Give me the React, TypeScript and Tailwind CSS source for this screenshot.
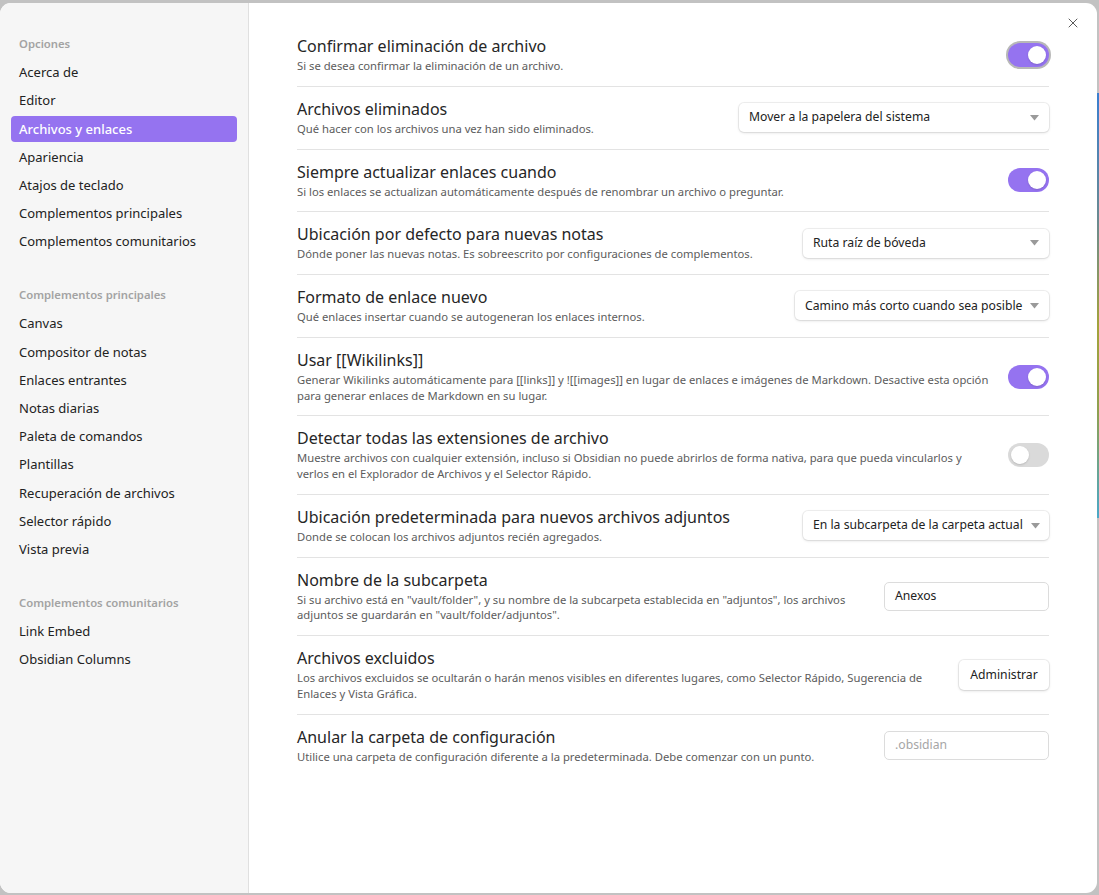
import { X } from "lucide-react";

type Control =
  | { kind: "toggle"; on: boolean; focused?: boolean }
  | { kind: "select"; value: string; width: string }
  | { kind: "input"; value: string; placeholder?: boolean }
  | { kind: "button"; label: string };

type Setting = {
  name: string;
  desc: string[];
  control: Control;
};

const settings: Setting[] = [
  {
    name: "Confirmar eliminación de archivo",
    desc: ["Si se desea confirmar la eliminación de un archivo."],
    control: { kind: "toggle", on: true, focused: true },
  },
  {
    name: "Archivos eliminados",
    desc: ["Qué hacer con los archivos una vez han sido eliminados."],
    control: { kind: "select", value: "Mover a la papelera del sistema", width: "w-[310px]" },
  },
  {
    name: "Siempre actualizar enlaces cuando",
    desc: ["Si los enlaces se actualizan automáticamente después de renombrar un archivo o preguntar."],
    control: { kind: "toggle", on: true },
  },
  {
    name: "Ubicación por defecto para nuevas notas",
    desc: ["Dónde poner las nuevas notas. Es sobreescrito por configuraciones de complementos."],
    control: { kind: "select", value: "Ruta raíz de bóveda", width: "w-[246px]" },
  },
  {
    name: "Formato de enlace nuevo",
    desc: ["Qué enlaces insertar cuando se autogeneran los enlaces internos."],
    control: { kind: "select", value: "Camino más corto cuando sea posible", width: "w-[254px]" },
  },
  {
    name: "Usar [[Wikilinks]]",
    desc: [
      "Generar Wikilinks automáticamente para [[links]] y ![[images]] en lugar de enlaces e imágenes de Markdown. Desactive esta opción",
      "para generar enlaces de Markdown en su lugar.",
    ],
    control: { kind: "toggle", on: true },
  },
  {
    name: "Detectar todas las extensiones de archivo",
    desc: [
      "Muestre archivos con cualquier extensión, incluso si Obsidian no puede abrirlos de forma nativa, para que pueda vincularlos y",
      "verlos en el Explorador de Archivos y el Selector Rápido.",
    ],
    control: { kind: "toggle", on: false },
  },
  {
    name: "Ubicación predeterminada para nuevos archivos adjuntos",
    desc: ["Donde se colocan los archivos adjuntos recién agregados."],
    control: { kind: "select", value: "En la subcarpeta de la carpeta actual", width: "w-[246px]" },
  },
  {
    name: "Nombre de la subcarpeta",
    desc: [
      "Si su archivo está en \"vault/folder\", y su nombre de la subcarpeta establecida en \"adjuntos\", los archivos",
      "adjuntos se guardarán en \"vault/folder/adjuntos\".",
    ],
    control: { kind: "input", value: "Anexos" },
  },
  {
    name: "Archivos excluidos",
    desc: [
      "Los archivos excluidos se ocultarán o harán menos visibles en diferentes lugares, como Selector Rápido, Sugerencia de",
      "Enlaces y Vista Gráfica.",
    ],
    control: { kind: "button", label: "Administrar" },
  },
  {
    name: "Anular la carpeta de configuración",
    desc: ["Utilice una carpeta de configuración diferente a la predeterminada. Debe comenzar con un punto."],
    control: { kind: "input", value: ".obsidian", placeholder: true },
  },
];

const nav = [
  {
    title: "Opciones",
    items: [
      "Acerca de",
      "Editor",
      "Archivos y enlaces",
      "Apariencia",
      "Atajos de teclado",
      "Complementos principales",
      "Complementos comunitarios",
    ],
  },
  {
    title: "Complementos principales",
    items: [
      "Canvas",
      "Compositor de notas",
      "Enlaces entrantes",
      "Notas diarias",
      "Paleta de comandos",
      "Plantillas",
      "Recuperación de archivos",
      "Selector rápido",
      "Vista previa",
    ],
  },
  {
    title: "Complementos comunitarios",
    items: ["Link Embed", "Obsidian Columns"],
  },
];

function Toggle({ on, focused }: { on: boolean; focused?: boolean }) {
  return (
    <div
      className={`flex h-[24px] w-[41px] items-center rounded-full px-[3px] ${
        on ? "justify-end bg-[#9573f0]" : "justify-start bg-[#dadada]"
      } ${focused ? "ring-2 ring-[#b8b8b8]" : ""}`}
    >
      <div className="h-[18px] w-[18px] rounded-full bg-white shadow-[0_1px_2px_rgba(0,0,0,0.15)]" />
    </div>
  );
}

function SettingControl({ control }: { control: Control }) {
  if (control.kind === "toggle") return <Toggle on={control.on} focused={control.focused} />;
  if (control.kind === "select") {
    return (
      <div
        className={`flex h-[29px] ${control.width} items-center justify-between rounded-[5px] bg-white pl-[10px] pr-[10px] text-[12.2px] text-[#222] shadow-[0_0_0_1px_rgba(0,0,0,0.06),0_1px_3px_rgba(0,0,0,0.12)]`}
      >
        <span className="whitespace-nowrap">{control.value}</span>
        <svg width="9" height="6" viewBox="0 0 9 6" className="ml-2 shrink-0">
          <path d="M0 0h9L4.5 5.5z" fill="#9a9a9a" />
        </svg>
      </div>
    );
  }
  if (control.kind === "input") {
    return (
      <div
        className={`flex h-[29px] w-[165px] items-center rounded-[5px] border border-[#dcdcdc] bg-white px-[10px] text-[12.2px] ${
          control.placeholder ? "text-[#a6a6a6]" : "text-[#222]"
        }`}
      >
        {control.value}
      </div>
    );
  }
  return (
    <div className="flex h-[30px] w-[90px] items-center justify-center rounded-[5px] bg-white text-[12.2px] text-[#222] shadow-[0_0_0_1px_rgba(0,0,0,0.06),0_1px_3px_rgba(0,0,0,0.14)]">
      {control.label}
    </div>
  );
}

export default function App() {
  return (
    <div
      className="flex h-[895px] w-[1099px] bg-[#c2c2c2] pt-[3px] pb-[2px] text-[#222]"
      style={{ fontFamily: '"Noto Sans", "Open Sans", sans-serif' }}
    >
      <div className="flex min-w-0 flex-1 overflow-hidden rounded-[11px] bg-white">
        <aside className="w-[249px] shrink-0 border-r border-[#e0e0e0] bg-[#f6f6f6] px-[11px] pt-[31px]">
          {nav.map((group, gi) => (
            <div key={group.title} className={gi > 0 ? "mt-[30px]" : ""}>
              <div className="px-[8px] pb-[6px] text-[11.3px] font-semibold leading-[20px] text-[#a3a3a3]">
                {group.title}
              </div>
              <div className="flex flex-col gap-[2.2px]">
                {group.items.map((item) => {
                  const active = gi === 0 && item === "Archivos y enlaces";
                  return (
                    <div
                      key={item}
                      className={`flex h-[26px] items-center rounded-[4px] px-[8px] text-[13px] ${
                        active ? "bg-[#9573f0] font-medium text-white" : "text-[#222]"
                      }`}
                    >
                      {item}
                    </div>
                  );
                })}
              </div>
            </div>
          ))}
        </aside>

        <main className="relative min-w-0 flex-1 px-[48px] pt-[21px]">
          <div className="absolute right-[16px] top-[12px] text-[#5a5a5a]">
            <X size={16} strokeWidth={1.5} />
          </div>
          {settings.map((s, i) => (
            <div
              key={s.name}
              className={`flex items-center gap-5 py-[12px] ${i > 0 ? "border-t border-[#e3e3e3]" : ""}`}
            >
              <div className="min-w-0 flex-1">
                <div className="text-[16px] leading-[20px] text-[#262626]">{s.name}</div>
                <div className="mt-[2px] text-[11.25px] leading-[15.75px] text-[#5c5c5c]">
                  {s.desc.map((line) => (
                    <div key={line} className="whitespace-nowrap">
                      {line}
                    </div>
                  ))}
                </div>
              </div>
              <div className="shrink-0">
                <SettingControl control={s.control} />
              </div>
            </div>
          ))}
        </main>
      </div>
      <div className="flex w-[2px] flex-col">
        <div className="h-[90px] bg-[#c2c2c2]" />
        <div className="h-[425px] bg-[linear-gradient(#3a7fd0,#6a8a90_30%,#a3a33a_55%,#8ea050_75%,#4aa8c8)]" />
        <div className="flex-1 bg-[#c2c2c2]" />
      </div>
    </div>
  );
}
